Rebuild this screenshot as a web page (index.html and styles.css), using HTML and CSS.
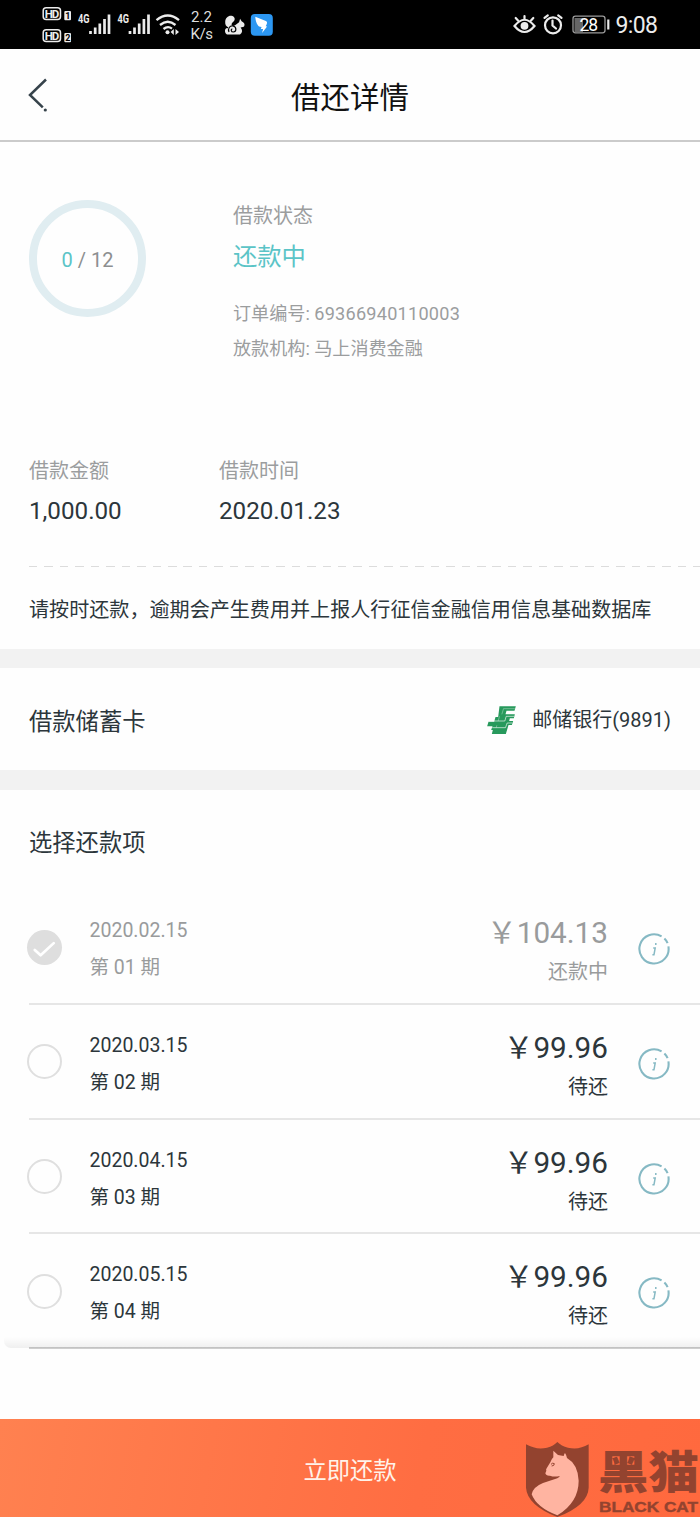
FILE: index.html
```html
<!DOCTYPE html>
<html lang="zh-CN">
<head>
<meta charset="utf-8">
<title>借还详情</title>
<link rel="stylesheet" href="styles.css">
</head>
<body>
<svg class="defs" width="0" height="0">
  <symbol id="info" viewBox="0 0 32 32">
    <path d="M23.6 3.4A14.6 14.6 0 1 0 30.4 13.4M26.4 5.6A14.6 14.6 0 0 1 29.6 10.2" fill="none" stroke="#86b9c4" stroke-width="2.100"/>
    <path d="M17.800 10v2M15.200 15h2l-1.200 6.600M14.400 21.800h2.200" fill="none" stroke="#86b9c4" stroke-width="1.5"/>
  </symbol>
</svg>
<div class="statusbar">
  <svg class="status-left" viewBox="0 0 260 49" width="260" height="49">
    <g fill="none" stroke="#ececec" stroke-width="1.500">
      <rect x="13.200" y="7.700" width="17.300" height="11.800" rx="3"/>
      <rect x="13.200" y="29.700" width="17.300" height="11.800" rx="3"/>
    </g>
    <g fill="#ececec">
      <rect x="34.300" y="11" width="6.700" height="9.300" rx="1"/>
      <rect x="34.300" y="33" width="6.700" height="9.300" rx="1"/>
    </g>
    <g class="hd" fill="#ececec">
      <text x="14.800" y="17.600" font-size="11.500" textLength="14.500">HD</text>
      <text x="14.800" y="39.600" font-size="11.500" textLength="14.500">HD</text>
    </g>
    <g class="hd" fill="#000">
      <text x="35.300" y="18.800" font-size="9">1</text>
      <text x="35.200" y="40.800" font-size="9">2</text>
    </g>
    <g class="hd" fill="#ececec">
      <text x="48" y="23" font-size="12" textLength="11.500" lengthAdjust="spacingAndGlyphs">4G</text>
      <text x="87.500" y="23" font-size="12" textLength="11.500" lengthAdjust="spacingAndGlyphs">4G</text>
    </g>
    <path d="M60.5 31v3M65.2 27.500v6.500M69.800 23.500v10.500M74.500 19v15M79 14.500v19.500M100 31v3M104.500 27.500v6.500M109.200 23.500v10.500M113.900 19v15M118.500 14.500v19.500" stroke="#ececec" stroke-width="2.7"/>
    <path d="M126.500 20.200q11.200-9.500 22.500 0M130 25q7.800-6.500 15.500 0M133.500 29q4.300-3.400 8.500-.4" fill="none" stroke="#ececec" stroke-width="2.3"/>
    <circle cx="137.500" cy="32.300" r="2" fill="#ececec"/>
    <path d="M143.800 29v6l-3.200-3zM145.500 29v6l3.500-3z" fill="#ececec"/>
    <g class="rate" fill="#dedede">
      <text x="161" y="22" font-size="15" textLength="21">2.2</text>
      <text x="160.500" y="39" font-size="15" textLength="22.500">K/s</text>
    </g>
    <path d="M197 34.500c-1.500-1-2.200-2.500-2-4 .2-1.800 1.300-2.700 3-3.300-2-1-3-2.800-2.800-5.500.2-3.800 3-6.400 6.300-6 3 .5 4.300 3.500 2.300 5.500-1.500 1.500-2.800 2.500-2 4 .9 1.500 3 .6 4.300-.6l3-2.400 1-3.400 1.500 2.500c2.300 1 3.500 2.800 2.700 4.800-.6 1-2 1.300-3.700 1.300 2.200 2.500 2 5.200-.6 7.100z" fill="#ececec"/>
    <path d="M199 32c-1.500-3.500.8-6.500 4-6 4 .8 3.500 6 .3 6-2.300 0-2.800-2.600-1-3.300M194.500 27.500l3.500.2" fill="none" stroke="#000" stroke-width="1.200"/>
    <rect x="220.800" y="14" width="22" height="21.800" rx="4" fill="#2c97f2"/>
    <path d="M225.300 16.800l10.600 4.200c1.600.8 1.600 2-.2 5.300l1.400.2-5 6.600 1-4.200h-2.300l.8-2c-2-.1-3.400-.8-3.900-2-1.200-1.200-2.300-5-2.400-8.100z" fill="#fff"/>
  </svg>
  <svg class="status-right" viewBox="500 0 200 49" width="200" height="49">
    <g fill="none" stroke="#ececec" stroke-width="2.200" stroke-linecap="round">
      <path d="M514.500 26q10-12.500 20 0-10 12-20 0zM524.500 19v-3M518 20.500l-2.300-2.500M531 20.500l2.300-2.500"/>
      <circle cx="553" cy="25.300" r="8"/>
      <path d="M552.500 20.500v5l3.500 3M544.500 17.800l3.300-2.500M561.500 17.800l-3.300-2.500"/>
    </g>
    <circle cx="524.500" cy="25.800" r="3.900" fill="#ececec"/>
    <rect x="574.500" y="18" width="8.500" height="14" fill="#666"/>
    <rect x="573" y="16.200" width="32" height="16.600" rx="2.500" fill="none" stroke="#9a9a9a" stroke-width="1.300"/>
    <path d="M608.300 19.500v10" stroke="#ececec" stroke-width="2.200"/>
    <text class="rate" x="579.500" y="30.500" font-size="17.500" fill="#fff" textLength="18.500">28</text>
    <text class="rate" x="615.500" y="33" font-size="23" fill="#ececec" textLength="42.500">9:08</text>
  </svg>
</div>

<header class="header">
  <svg class="back" viewBox="0 0 22 36" width="22" height="36"><path d="M19 2.500L3 18l12.800 12.300" fill="none" stroke="#36434b" stroke-width="2.500"/><circle cx="18.300" cy="33" r="1.600" fill="#36434b"/></svg>
  <h1 class="title">借还详情</h1>
</header>

<section class="summary">
  <div class="overview">
    <div class="ring"><span><b class="done">0</b> / 12</span></div>
    <div class="state">
      <div class="label">借款状态</div>
      <div class="state-value">还款中</div>
      <div class="meta">订单编号: <span class="order-no">69366940110003</span></div>
      <div class="meta">放款机构: 马上消费金融</div>
    </div>
  </div>
  <div class="figures">
    <div class="figure"><div class="label">借款金额</div><div class="value">1,000.00</div></div>
    <div class="figure"><div class="label">借款时间</div><div class="value">2020.01.23</div></div>
  </div>
  <div class="dashes"></div>
  <p class="notice">请按时还款，逾期会产生费用并上报人行征信金融信用信息基础数据库</p>
</section>

<section class="card">
  <span class="section-title">借款储蓄卡</span>
  <span class="bank">
    <svg viewBox="17 18 86 84" width="29" height="28">
      <path d="M54 19h49l-4 13H75l-3 11h28l-3 12H85l-2 8h12l-4 12H81l-8 27H31l3-12h-5l4-11H17l4-14h17l4-14h8z" fill="#27995c"/>
      <path d="M98 49H74l-4 14H22M92 69H77l-5 14H32" fill="none" stroke="#fff" stroke-opacity=".75" stroke-width="2.500"/>
      <path d="M100 26H66l-5 17M54 49l-4 14M46 76l-2 7" fill="none" stroke="#fff" stroke-opacity=".4" stroke-width="2.500"/>
    </svg>
    <span class="bank-name">邮储银行(9891)</span>
  </span>
</section>

<section class="plan">
  <h2 class="section-title">选择还款项</h2>
  <div class="row paid">
    <span class="radio"><svg viewBox="0 0 36 36" width="35" height="35"><path d="M8 20.500l6 5.500L27.500 13.500" fill="none" stroke="#fff" stroke-width="2.800" stroke-linecap="round" stroke-linejoin="round"/></svg></span>
    <div class="term"><div>2020.02.15</div><div>第 01 期</div></div>
    <div class="due"><div class="amount">￥104.13</div><div class="due-state">还款中</div></div>
    <svg class="info"><use href="#info"/></svg>
  </div>
  <div class="row">
    <span class="radio"></span>
    <div class="term"><div>2020.03.15</div><div>第 02 期</div></div>
    <div class="due"><div class="amount">￥99.96</div><div class="due-state">待还</div></div>
    <svg class="info"><use href="#info"/></svg>
  </div>
  <div class="row">
    <span class="radio"></span>
    <div class="term"><div>2020.04.15</div><div>第 03 期</div></div>
    <div class="due"><div class="amount">￥99.96</div><div class="due-state">待还</div></div>
    <svg class="info"><use href="#info"/></svg>
  </div>
  <div class="row last">
    <span class="radio"></span>
    <div class="term"><div>2020.05.15</div><div>第 04 期</div></div>
    <div class="due"><div class="amount">￥99.96</div><div class="due-state">待还</div></div>
    <svg class="info"><use href="#info"/></svg>
  </div>
</section>

<footer class="pay">
  <span>立即还款</span>
  <svg class="brand" viewBox="520 1437 180 80" width="180" height="80">
    <g transform="translate(500 1410) scale(.33333)">
      <path d="M78 103q32 18 63 10 20-5 31-17 12 12 32 17 32 8 62-10v130q-2 53-94 88-90-35-94-88z" fill="#93432f"/>
      <path d="M172 316q-62-23-77-63 4-22 34-34l43-14q8-4 7-7-16 4-29-1-12 1-14-7l3-8q-2-3 1-7l11-18q5-12 9-15v-20l14 13 17 3q2-7 4-9 5 7 6 15 33 19 35 68 0 65-64 104z" fill="#ffb4a1"/>
      <path d="M153 163q5-6 10-2 0 7-8 7" fill="none" stroke="#93432f" stroke-width="3"/>
    </g>
    <text class="brand-cn" x="598" y="1488.500" textLength="101" lengthAdjust="spacingAndGlyphs">黑猫</text>
    <text class="brand-en" x="599" y="1511.500" textLength="99" lengthAdjust="spacingAndGlyphs">BLACK CAT</text>
  </svg>
</footer>
</body>
</html>
```
FILE: styles.css
```css
* { box-sizing: border-box; }
body {
  margin: 0;
  width: 700px;
  background: #fefefe;
  color: #2c363b;
  font-family: Roboto, "Noto Sans CJK SC", sans-serif;
  font-weight: 400;
}
h1, h2, p { margin: 0; font-weight: inherit; }
svg { display: block; flex: none; }
.defs { position: absolute; }

.statusbar { display: flex; justify-content: space-between; height: 49px; background: #000; padding-left: 30px; }
.hd { font-family: Roboto, sans-serif; font-weight: 700; }
.rate { font-family: Roboto, sans-serif; font-weight: 400; }

.header {
  display: grid;
  grid-template-columns: 60px 1fr 60px;
  align-items: center;
  height: 93px;
  border-bottom: 2px solid #cbcbcb;
}
.back { margin-left: 27px; }
.title { padding-top: 6px; text-align: center; font-size: 29.500px; line-height: 40px; color: #111; }

.summary { height: 507px; padding: 58px 0 0 29px; }
.overview { display: flex; gap: 87px; height: 256px; }
.ring {
  display: flex;
  align-items: center;
  justify-content: center;
  flex: none;
  width: 117px;
  height: 117px;
  border: 8px solid #e0edf1;
  border-radius: 50%;
  padding-top: 3px;
  font-size: 20px;
  color: #8d8f90;
}
.done { font-weight: 400; color: #5bc4c7; }
.label { font-size: 20px; line-height: 30px; color: #9b9d9e; }
.state { padding-top: 1px; }
.state-value { margin: 8px 0 21px; font-size: 24.300px; line-height: 36px; color: #5bc4c7; }
.meta { font-size: 18.100px; line-height: 35px; color: #9b9d9e; }
.order-no { letter-spacing: .25px; }
.figures { display: grid; grid-template-columns: 190px 1fr; height: 110px; }
.value { margin-top: 8px; font-size: 24.200px; line-height: 34px; }
.dashes { height: 1px; background: repeating-linear-gradient(90deg, #dcdcdc 0 8.500px, transparent 8.500px 15.450px); }
.notice { padding-top: 28px; font-size: 20.080px; line-height: 30px; white-space: nowrap; }

.card {
  display: flex;
  align-items: center;
  justify-content: space-between;
  height: 141px;
  border: solid #f2f2f2;
  border-width: 19px 0 20px;
  padding: 2px 29px 0;
}
.section-title { font-size: 23.300px; line-height: 34px; }
.card .section-title { padding-top: 3px; }
.bank { display: flex; align-items: center; gap: 16px; font-size: 20px; line-height: 28px; }

.plan { padding: 36px 0 0 29px; }
.plan .section-title { margin-bottom: 30.300px; }
.row {
  display: grid;
  grid-template-columns: 60.500px 1fr auto 92px;
  height: 114.700px;
  border-bottom: 2px solid #e6e6e6;
  padding-top: 22px;
}
.radio { width: 35px; height: 35px; margin: 17.500px 0 0 -2px; border: 2px solid #dfdfdf; border-radius: 50%; }
.paid .radio { background: #dedede; border: 0; }
.term { font-size: 19.500px; line-height: 37px; }
.due { text-align: right; line-height: 42px; }
.amount { font-size: 29.700px; }
.due-state { font-size: 20px; line-height: 37px; }
.paid { color: #999b9c; }
.info { width: 32px; height: 32px; margin: 21px 0 0 30px; }
.last { position: relative; border-color: #cecece; }
.last::after {
  content: "";
  position: absolute;
  left: -25px;
  right: 0;
  bottom: -1px;
  height: 11px;
  border-radius: 0 0 0 7px;
  background: linear-gradient(rgba(0, 0, 0, 0), rgba(0, 0, 0, .06));
}

.pay {
  position: relative;
  display: flex;
  align-items: center;
  justify-content: center;
  height: 98px;
  margin-top: 70px;
  padding-top: 1px;
  background: linear-gradient(100deg, #ff8150, #ff6d42 60%, #ff693e);
  color: #fff3ea;
  font-size: 23.300px;
}
.brand { position: absolute; right: 0; bottom: 0; }
.brand-cn { font: 900 45px "Noto Sans CJK SC", sans-serif; fill: #93432f; }
.brand-en { font: 700 14.500px "Liberation Sans", sans-serif; fill: #93432f; stroke: #93432f; stroke-width: .4px; }
```
